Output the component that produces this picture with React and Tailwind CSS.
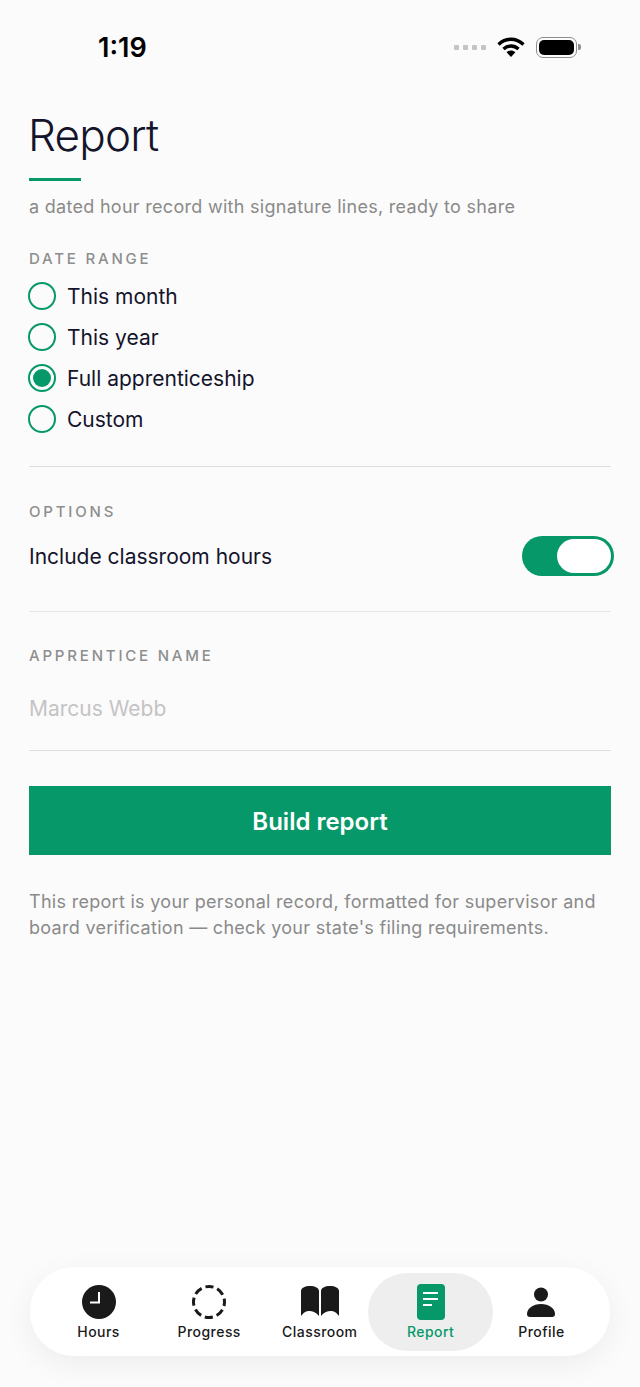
const GREEN = '#079869';

function StatusBar() {
  return (
    <div className="flex items-center justify-between h-[94px] pl-[98px] pr-[59px]">
      <span className="text-[27px] font-semibold text-black leading-none">1:19</span>
      <div className="flex items-center">
        <div className="flex gap-[4px] mr-[11px] mt-[1px]">
          <span className="w-[5px] h-[5px] rounded-[1px] bg-[#c4c4c4]" />
          <span className="w-[5px] h-[5px] rounded-[1px] bg-[#c4c4c4]" />
          <span className="w-[5px] h-[5px] rounded-[1px] bg-[#c4c4c4]" />
          <span className="w-[5px] h-[5px] rounded-[1px] bg-[#c4c4c4]" />
        </div>
        <svg width="28" height="20" viewBox="0 0 28 20" className="mr-[11px]">
          <path d="M1.5 7.5C9 .5 19 .5 26.5 7.5" fill="none" stroke="#000" strokeWidth="3.4" />
          <path d="M6.5 12C11 8 17 8 21.5 12" fill="none" stroke="#000" strokeWidth="3.4" />
          <path d="M9.6 15.2C12.4 12.8 15.6 12.8 18.4 15.2L14 20Z" fill="#000" />
        </svg>
        <div className="w-[41px] h-[21px] rounded-[7px] border border-[#8e8e8e] p-[2px]">
          <div className="w-full h-full rounded-[5px] bg-black" />
        </div>
        <span className="w-[3px] h-[6px] ml-[1px] rounded-r-[2px] bg-[#8e8e8e]" />
      </div>
    </div>
  );
}

function SectionLabel({ children, className = '' }) {
  return <div className={`text-[15px] leading-[18px] font-medium tracking-[2.8px] text-[#8e8e8e] ${className}`}>{children}</div>;
}

function Radio({ label, checked }) {
  return (
    <div className="flex items-center h-[41px]">
      <span className="flex items-center justify-center w-[28px] h-[28px] -ml-px rounded-full border-2 border-[#079869] mr-[11px]">
        {checked && <span className="w-[18px] h-[18px] rounded-full bg-[#079869]" />}
      </span>
      <span className="mt-[2px] text-[21px] text-[#14142b]">{label}</span>
    </div>
  );
}

function Tab({ label, active, children }) {
  return (
    <div className={`flex flex-col items-center justify-center h-[78px] ${active ? 'w-[125px] -mx-[7px] rounded-[39px] bg-[#eeeeee]' : 'w-[110.6px]'}`}>
      <div className="h-[38px] flex items-center justify-center">{children}</div>
      <span className={`mt-[2px] text-[14px] leading-[18px] font-medium tracking-[0.45px] ${active ? 'text-[#079869]' : 'text-[#1a1a1a]'}`}>{label}</span>
    </div>
  );
}

function BottomNav() {
  return (
    <div className="mt-auto mb-[31px] mx-[30px] h-[89px] rounded-[44px] bg-white shadow-[0_8px_30px_rgba(0,0,0,0.06)] flex items-center justify-center">
      <Tab label="Hours">
        <svg width="34" height="34" viewBox="0 0 34 34">
          <circle cx="17" cy="17" r="17" fill="#1a1a1a" />
          <path d="M17 7V17.5H8" fill="none" stroke="#fff" strokeWidth="2" />
        </svg>
      </Tab>
      <Tab label="Progress">
        <svg width="34" height="34" viewBox="0 0 34 34">
          <circle cx="17" cy="17" r="15.5" fill="none" stroke="#1a1a1a" strokeWidth="3" strokeDasharray="8.2 3.97" strokeDashoffset="4.1" />
        </svg>
      </Tab>
      <Tab label="Classroom">
        <svg width="40" height="31" viewBox="0 0 40 31">
          <path d="M1 5C1 2 5 0 10 0C15 0 19 2 19 5V30C16 26 12 25 9 25C6 25 3 27 2 29C1.5 30 1 29.5 1 29Z" fill="#1a1a1a" />
          <path d="M39 5C39 2 35 0 30 0C25 0 21 2 21 5V30C24 26 28 25 31 25C34 25 37 27 38 29C38.5 30 39 29.5 39 29Z" fill="#1a1a1a" />
        </svg>
      </Tab>
      <Tab label="Report" active>
        <svg width="28" height="36" viewBox="0 0 28 36">
          <rect width="28" height="36" rx="4" fill={GREEN} />
          <path d="M6 9H21M6 15H21M6 21H15" stroke="#fff" strokeWidth="2" />
        </svg>
      </Tab>
      <Tab label="Profile">
        <svg width="28" height="30" viewBox="0 0 28 30">
          <circle cx="14" cy="7.5" r="7" fill="#1a1a1a" />
          <path d="M0 27C0 21.5 6 17 14 17C22 17 28 21.5 28 27C28 29 27 30 25 30H3C1 30 0 29 0 27Z" fill="#1a1a1a" />
        </svg>
      </Tab>
    </div>
  );
}

export default function App() {
  return (
    <div className="flex flex-col h-[1387px] bg-[#fbfbfb] font-['Inter','Liberation_Sans',sans-serif]">
      <StatusBar />
      <div className="px-[29px]">
        <h1 className="mt-[14px] -ml-px text-[44px] leading-[54px] font-light text-[#14142b] tracking-[-0.8px]">Report</h1>
        <div className="w-[52px] h-[3px] mt-[16px] bg-[#079869]" />
        <p className="mt-[13px] text-[18px] leading-[26px] tracking-[0.29px] text-[#8a8a8a]">a dated hour record with signature lines, ready to share</p>

        <SectionLabel className="mt-[30px]">DATE RANGE</SectionLabel>
        <div className="mt-[7px]">
          <Radio label="This month" />
          <Radio label="This year" />
          <Radio label="Full apprenticeship" checked />
          <Radio label="Custom" />
        </div>

        <div className="h-px mt-[27px] bg-[#dddddd]" />
        <SectionLabel className="mt-[36px]">OPTIONS</SectionLabel>
        <div className="flex items-center justify-between mt-[15px]">
          <span className="mt-[2px] text-[21px] text-[#14142b]">Include classroom hours</span>
          <div className="flex justify-end w-[92px] h-[40px] -mr-[3px] rounded-full bg-[#079869] p-[3px]">
            <div className="w-[54px] h-[34px] rounded-full bg-white" />
          </div>
        </div>

        <div className="h-px mt-[35px] bg-[#e6e6e6]" />
        <SectionLabel className="mt-[35px]">APPRENTICE NAME</SectionLabel>
        <div className="mt-[30px] text-[21px] leading-[28px] text-[#c4c4c4]">Marcus Webb</div>
        <div className="h-px mt-[27px] bg-[#dddddd]" />

        <div className="flex items-center justify-center h-[69px] pt-[2px] mt-[35px] bg-[#079869] text-[24px] font-semibold text-white">Build report</div>
        <p className="mt-[34px] text-[18px] leading-[26px] tracking-[0.29px] text-[#8a8a8a]">This report is your personal record, formatted for supervisor and board verification — check your state's filing requirements.</p>
      </div>
      <BottomNav />
    </div>
  );
}
